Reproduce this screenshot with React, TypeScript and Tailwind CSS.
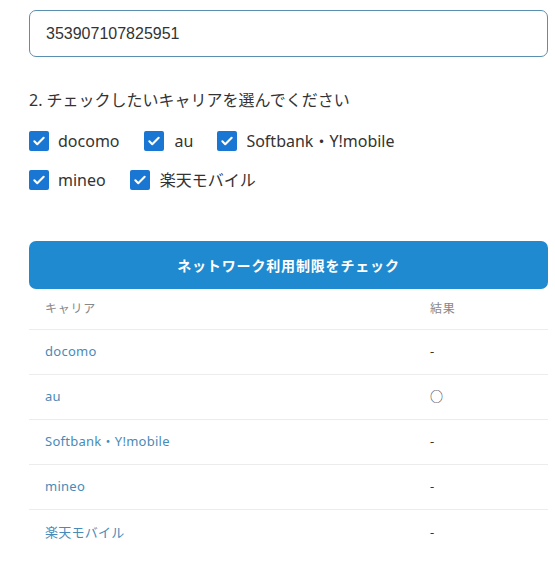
import React from "react";

const Check = () => (
  <span className="flex h-[20px] w-[20px] shrink-0 items-center justify-center rounded-[2px] bg-[#1976d2]">
    <svg width="14" height="14" viewBox="0 0 24 24" fill="none">
      <path d="M4 12.5l5 5L20 6.5" stroke="#fff" strokeWidth="3.6" strokeLinecap="round" strokeLinejoin="round" />
    </svg>
  </span>
);

const Item = ({ label, gap }: { label: string; gap: string }) => (
  <label className={`flex items-center ${gap}`}>
    <Check />
    <span className="text-[16px] leading-[24px] text-[#333]">{label}</span>
  </label>
);

const rows: [string, string][] = [
  ["docomo", "-"],
  ["au", "○"],
  ["Softbank・Y!mobile", "-"],
  ["mineo", "-"],
  ["楽天モバイル", "-"],
];

export default function App() {
  return (
    <div
      className="min-h-[571px] w-[555px] bg-white pl-[29px] pr-[7px] pt-[10px]"
      style={{ fontFamily: '"Noto Sans", "Noto Sans CJK JP", sans-serif' }}
    >
      <div
        className="flex h-[47px] items-center rounded-[7px] border border-[#5a8fb0] pl-[16px] text-[16px] text-[#333]"
        style={{ fontFamily: '"Liberation Sans", Arial, sans-serif' }}
      >
        353907107825951
      </div>

      <div className="mt-[32px] text-[16px] leading-[22px] text-[#333]">
        2. チェックしたいキャリアを選んでください
      </div>

      <div className="mt-[18px] flex items-center gap-[24px]">
        <Item label="docomo" gap="gap-[9px]" />
        <Item label="au" gap="gap-[11px]" />
        <Item label="Softbank・Y!mobile" gap="gap-[9px]" />
      </div>
      <div className="mt-[15px] flex items-center gap-[24px]">
        <Item label="mineo" gap="gap-[9px]" />
        <Item label="楽天モバイル" gap="gap-[10px]" />
      </div>

      <button className="mt-[49px] flex h-[48px] w-full items-center justify-center rounded-[7px] bg-[#1f8ad0] text-[14px] font-bold tracking-[0.06em] text-white">
        ネットワーク利用制限をチェック
      </button>

      <div className="text-[13px] tracking-[0.02em]">
        <div className="flex h-[41px] items-center border-b border-[#ececec] pl-[16px] text-[12px] tracking-[0.06em] text-[#888]">
          <div className="flex-1">キャリア</div>
          <div className="w-[118px]">結果</div>
        </div>
        {rows.map(([name, res], i) => (
          <div
            key={name}
            className={`flex h-[45px] items-center pl-[16px] ${i < rows.length - 1 ? "border-b border-[#ececec]" : ""}`}
          >
            <div className="flex-1 text-[#478bb8]">{name}</div>
            <div className="w-[118px] text-[#333]">{res}</div>
          </div>
        ))}
      </div>
    </div>
  );
}
